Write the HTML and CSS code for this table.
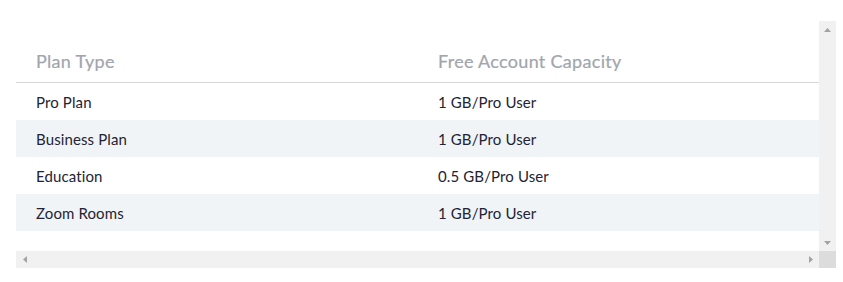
FILE: index.html
```html
<!DOCTYPE html>
<html>
<head>
<meta charset="utf-8">
<link rel="stylesheet" href="styles.css">
</head>
<body>
<div class="scroller">
  <div class="viewport">
    <table class="plans">
      <thead>
        <tr><th>Plan Type</th><th>Free Account Capacity</th></tr>
      </thead>
      <tbody>
        <tr><td>Pro Plan</td><td>1 GB/Pro User</td></tr>
        <tr class="alt"><td>Business Plan</td><td>1 GB/Pro User</td></tr>
        <tr><td>Education</td><td>0.5 GB/Pro User</td></tr>
        <tr class="alt"><td>Zoom Rooms</td><td>1 GB/Pro User</td></tr>
      </tbody>
    </table>
  </div>
  <div class="vbar">
    <span class="btn"><svg width="7" height="4" viewBox="0 0 7 4"><polygon points="3.5,0 7,4 0,4" fill="#a3a3a3"/></svg></span>
    <span class="btn"><svg width="7" height="4" viewBox="0 0 7 4"><polygon points="0,0 7,0 3.5,4" fill="#a3a3a3"/></svg></span>
  </div>
  <div class="hbar">
    <span class="btn"><svg width="4" height="7" viewBox="0 0 4 7"><polygon points="0,3.5 4,0 4,7" fill="#a3a3a3"/></svg></span>
    <span class="btn"><svg width="4" height="7" viewBox="0 0 4 7"><polygon points="0,0 4,3.5 0,7" fill="#a3a3a3"/></svg></span>
  </div>
  <div class="corner"></div>
</div>
</body>
</html>
```
FILE: styles.css
```css
html, body {
  margin: 0;
  padding: 0;
  background: #ffffff;
}
body {
  font-family: Lato, "Open Sans", sans-serif;
}
.scroller {
  margin: 21px 0 0 16px;
  width: 820px;
  display: grid;
  grid-template-columns: 803px 17px;
  grid-template-rows: 230px 17px;
}
.viewport {
  overflow: hidden;
}
.plans {
  border-collapse: collapse;
  table-layout: fixed;
  width: 804px;
  margin-top: 20px;
}
.plans th, .plans td {
  width: 402px;
  text-align: left;
  padding-left: 20px;
  padding-right: 20px;
  box-sizing: border-box;
}
.plans th {
  font-size: 18px;
  font-weight: 400;
  color: #a1a5ad;
  line-height: 22px;
  letter-spacing: 0.3px;
  padding-top: 9px;
  padding-bottom: 10px;
  border-bottom: 1px solid #d6d6d6;
  -webkit-text-stroke: 0.2px #a1a5ad;
}
.plans td {
  font-size: 15px;
  color: #232333;
  line-height: 18px;
  letter-spacing: 0.12px;
  padding-top: 10px;
  padding-bottom: 9px;
}
.plans tr.alt td {
  background: #f0f4f7;
}
.vbar {
  background: #f1f1f1;
  display: flex;
  flex-direction: column;
  justify-content: space-between;
}
.hbar {
  background: #f1f1f1;
  display: flex;
  justify-content: space-between;
}
.btn {
  width: 17px;
  height: 17px;
  display: flex;
  align-items: center;
  justify-content: center;
}
.btn svg {
  display: block;
}
.corner {
  background: #dcdcdc;
}
```
